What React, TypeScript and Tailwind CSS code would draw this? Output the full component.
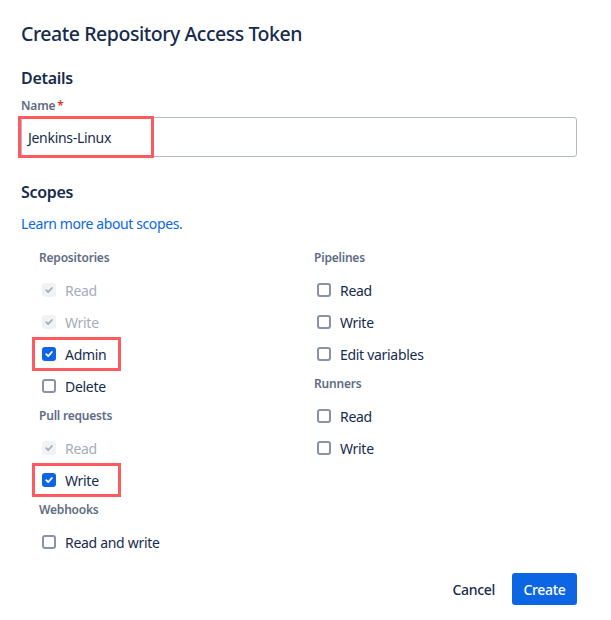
import React from 'react';

type Scope = {
  label: string;
  state: 'checked' | 'unchecked' | 'locked';
  marked?: boolean;
};

type Group = {
  title: string;
  scopes: Scope[];
};

const leftGroups: Group[] = [
  {
    title: 'Repositories',
    scopes: [
      { label: 'Read', state: 'locked' },
      { label: 'Write', state: 'locked' },
      { label: 'Admin', state: 'checked', marked: true },
      { label: 'Delete', state: 'unchecked' },
    ],
  },
  {
    title: 'Pull requests',
    scopes: [
      { label: 'Read', state: 'locked' },
      { label: 'Write', state: 'checked', marked: true },
    ],
  },
  {
    title: 'Webhooks',
    scopes: [{ label: 'Read and write', state: 'unchecked' }],
  },
];

const rightGroups: Group[] = [
  {
    title: 'Pipelines',
    scopes: [
      { label: 'Read', state: 'unchecked' },
      { label: 'Write', state: 'unchecked' },
      { label: 'Edit variables', state: 'unchecked' },
    ],
  },
  {
    title: 'Runners',
    scopes: [
      { label: 'Read', state: 'unchecked' },
      { label: 'Write', state: 'unchecked' },
    ],
  },
];

function Tick({ color }: { color: string }) {
  return (
    <svg width="10" height="10" viewBox="0 0 10 10" fill="none">
      <path d="M2.2 5.2 4.2 7.1 7.9 3" stroke={color} strokeWidth="1.8" strokeLinecap="round" strokeLinejoin="round" />
    </svg>
  );
}

function Box({ state }: { state: Scope['state'] }) {
  if (state === 'checked') {
    return (
      <span className="w-[14px] h-[14px] rounded-[3px] bg-[#0C66E4] flex items-center justify-center">
        <Tick color="#ffffff" />
      </span>
    );
  }
  if (state === 'locked') {
    return (
      <span className="w-[14px] h-[14px] rounded-[3px] bg-[#F1F2F4] flex items-center justify-center">
        <Tick color="#A5ADBA" />
      </span>
    );
  }
  return <span className="w-[14px] h-[14px] rounded-[3px] border-2 border-[#8993A4] bg-white" />;
}

function ScopeRow({ scope }: { scope: Scope }) {
  return (
    <div className="relative h-[32px] flex items-center pl-[3px] gap-[9px]">
      <Box state={scope.state} />
      <span
        className={
          scope.state === 'locked'
            ? 'text-[14px] tracking-[-0.3px] text-[#A5ADBA]'
            : 'text-[14px] tracking-[-0.3px] text-[#172B4D]'
        }
      >
        {scope.label}
      </span>
      {scope.marked && (
        <span className="absolute left-[-7px] top-[-1px] w-[89px] h-[34px] border-[3px] border-[#FF5A5F]" />
      )}
    </div>
  );
}

function ScopeColumn({ groups, width }: { groups: Group[]; width: string }) {
  return (
    <div className={width}>
      {groups.map((group) => (
        <div key={group.title}>
          <div className="h-[30px] pt-[6px] text-[12px] leading-[16px] font-semibold tracking-[-0.2px] text-[#5E6C84]">
            {group.title}
          </div>
          {group.scopes.map((scope) => (
            <ScopeRow key={group.title + scope.label} scope={scope} />
          ))}
        </div>
      ))}
    </div>
  );
}

export default function App() {
  return (
    <div className="w-[611px] h-[620px] bg-white pl-[21px] pt-[22px] font-['Noto_Sans',sans-serif] text-[#172B4D]">
      <h1 className="text-[19.5px] leading-[24px] font-medium tracking-[-0.45px]">Create Repository Access Token</h1>

      <h2 className="mt-[22px] text-[16px] leading-[20px] font-semibold tracking-[-0.3px]">Details</h2>
      <div className="mt-[10px] text-[12px] leading-[16px] font-semibold tracking-[-0.2px] text-[#5E6C84]">
        Name<span className="text-[#DE350B] ml-[2px]">*</span>
      </div>
      <div className="relative mt-[3px] w-[556px] h-[40px] border border-[#B3B9C4] rounded-[3px] flex items-center px-[6px] text-[14px] tracking-[-0.3px]">
        Jenkins-Linux
        <span className="absolute left-[-4px] top-[-2px] w-[136px] h-[42px] border-[3px] border-[#FF5A5F]" />
      </div>

      <h2 className="mt-[25px] text-[16px] leading-[20px] font-semibold tracking-[-0.3px]">Scopes</h2>
      <div className="mt-[12px] text-[14px] leading-[20px] tracking-[-0.4px] text-[#0C66E4]">Learn more about scopes.</div>

      <div className="mt-[10px] pl-[18px] flex">
        <ScopeColumn groups={leftGroups} width="w-[275px]" />
        <ScopeColumn groups={rightGroups} width="w-[262px]" />
      </div>

      <div className="mt-[15px] w-[556px] flex justify-end items-center gap-[5px]">
        <button className="h-[32px] px-[12px] text-[14px] font-medium tracking-[-0.3px] text-[#172B4D]">Cancel</button>
        <button className="h-[32px] w-[65px] rounded-[3px] bg-[#0C66E4] text-[14px] font-medium tracking-[-0.3px] text-white">
          Create
        </button>
      </div>
    </div>
  );
}
